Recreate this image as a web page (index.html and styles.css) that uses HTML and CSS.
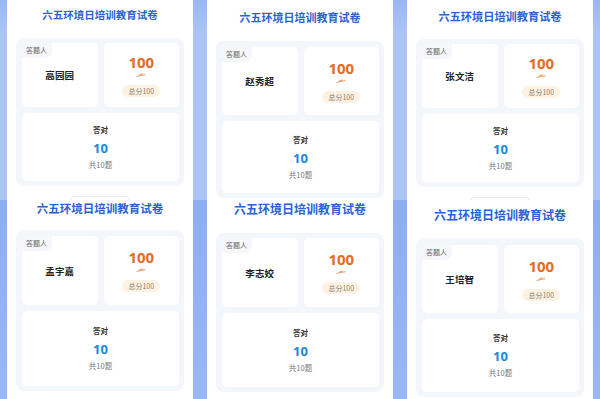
FILE: index.html
```html
<!DOCTYPE html>
<html lang="zh-CN">
  <head>
    <meta charset="utf-8">
    <title>六五环境日培训教育试卷</title>
    <link rel="stylesheet" href="styles.css">
  </head>
  <body>
    <div class="collage">
      <div class="shot s1">
        <div class="phone">
          <h1 class="title">六五环境日培训教育试卷</h1>
          <div class="panel">
            <div class="card who"><span class="tag">答题人</span><span class="name">高园园</span></div>
            <div class="card score">
              <span class="points">100</span>
              <svg class="swoosh" width="10" height="4" viewBox="0 0 10 4"><path d="M1 3.4 L6 2.2 L9 1.8" /><path d="M3.5 2 L6.5 0.9" /></svg>
              <span class="total">总分100</span>
            </div>
            <div class="card right"><span class="label">答对</span><span class="count">10</span><span class="of">共10题</span></div>
          </div>
          <div class="btn"></div>
        </div>
      </div>
      <div class="shot s2">
        <div class="phone">
          <h1 class="title">六五环境日培训教育试卷</h1>
          <div class="panel">
            <div class="card who"><span class="tag">答题人</span><span class="name">赵秀超</span></div>
            <div class="card score">
              <span class="points">100</span>
              <svg class="swoosh" width="10" height="4" viewBox="0 0 10 4"><path d="M1 3.4 L6 2.2 L9 1.8" /><path d="M3.5 2 L6.5 0.9" /></svg>
              <span class="total">总分100</span>
            </div>
            <div class="card right"><span class="label">答对</span><span class="count">10</span><span class="of">共10题</span></div>
          </div>
          <div class="btn"></div>
        </div>
      </div>
      <div class="shot s3">
        <div class="phone">
          <h1 class="title">六五环境日培训教育试卷</h1>
          <div class="panel">
            <div class="card who"><span class="tag">答题人</span><span class="name">张文洁</span></div>
            <div class="card score">
              <span class="points">100</span>
              <svg class="swoosh" width="10" height="4" viewBox="0 0 10 4"><path d="M1 3.4 L6 2.2 L9 1.8" /><path d="M3.5 2 L6.5 0.9" /></svg>
              <span class="total">总分100</span>
            </div>
            <div class="card right"><span class="label">答对</span><span class="count">10</span><span class="of">共10题</span></div>
          </div>
          <div class="btn"></div>
        </div>
      </div>
      <div class="shot s4">
        <div class="phone">
          <h1 class="title">六五环境日培训教育试卷</h1>
          <div class="panel">
            <div class="card who"><span class="tag">答题人</span><span class="name">孟宇嘉</span></div>
            <div class="card score">
              <span class="points">100</span>
              <svg class="swoosh" width="10" height="4" viewBox="0 0 10 4"><path d="M1 3.4 L6 2.2 L9 1.8" /><path d="M3.5 2 L6.5 0.9" /></svg>
              <span class="total">总分100</span>
            </div>
            <div class="card right"><span class="label">答对</span><span class="count">10</span><span class="of">共10题</span></div>
          </div>
          <div class="btn"></div>
        </div>
      </div>
      <div class="shot s5">
        <div class="phone">
          <h1 class="title">六五环境日培训教育试卷</h1>
          <div class="panel">
            <div class="card who"><span class="tag">答题人</span><span class="name">李志姣</span></div>
            <div class="card score">
              <span class="points">100</span>
              <svg class="swoosh" width="10" height="4" viewBox="0 0 10 4"><path d="M1 3.4 L6 2.2 L9 1.8" /><path d="M3.5 2 L6.5 0.9" /></svg>
              <span class="total">总分100</span>
            </div>
            <div class="card right"><span class="label">答对</span><span class="count">10</span><span class="of">共10题</span></div>
          </div>
          <div class="btn"></div>
        </div>
      </div>
      <div class="shot s6">
        <div class="phone">
          <h1 class="title">六五环境日培训教育试卷</h1>
          <div class="panel">
            <div class="card who"><span class="tag">答题人</span><span class="name">王培智</span></div>
            <div class="card score">
              <span class="points">100</span>
              <svg class="swoosh" width="10" height="4" viewBox="0 0 10 4"><path d="M1 3.4 L6 2.2 L9 1.8" /><path d="M3.5 2 L6.5 0.9" /></svg>
              <span class="total">总分100</span>
            </div>
            <div class="card right"><span class="label">答对</span><span class="count">10</span><span class="of">共10题</span></div>
          </div>
          <div class="btn"></div>
        </div>
      </div>
    </div>
  </body>
</html>
```

FILE: styles.css
```css
* {
  margin: 0;
  padding: 0;
  box-sizing: border-box;
}
body {
  width: 600px;
  height: 399px;
  overflow: hidden;
  background: #fff;
  font-family: "Noto Sans CJK SC", "Noto Sans", sans-serif;
}
.collage {
  display: grid;
  grid-template-columns: 200px 200px 200px;
  grid-template-rows: 200px 199px;
}
.shot {
  overflow: hidden;
  padding: 0 7px;
  background: linear-gradient(180deg, #9bb7f5 0%, #a9c3f7 15%, #a9c3f7 100%);
}
.s4, .s5, .s6 {
  background: linear-gradient(180deg, #8eaef3 0%, #9ab7f5 100%);
}
.phone {
  height: 100%;
  background: #fff;
  display: flex;
  flex-direction: column;
}
.title {
  margin-top: var(--pt);
  height: 16px;
  line-height: 16px;
  text-align: center;
  font-size: var(--tfs);
  font-weight: 600;
  color: #2b62d3;
  white-space: nowrap;
}
.panel {
  margin: var(--gap) 9px 0;
  padding: var(--ppt) 5px 5px 6px;
  background: #f3f6fa;
  border-radius: 8px;
  display: grid;
  grid-template-columns: 1fr 1fr;
  grid-template-rows: var(--ch) var(--bh);
  gap: 6px;
}
.card {
  background: #fff;
  border-radius: 5px;
  display: flex;
  flex-direction: column;
  align-items: center;
  justify-content: center;
}
.who {
  position: relative;
}
.tag {
  position: absolute;
  left: 0;
  top: 0;
  padding: 2px 5px 3px 4px;
  font-size: 7px;
  line-height: 10px;
  color: #666;
  background: #f5f7fa;
  border-radius: 5px 0 7px 0;
}
.name {
  font-size: 9.5px;
  font-weight: 600;
  color: #222;
  letter-spacing: 0.2px;
}
.points {
  font-family: "Noto Sans", sans-serif;
  font-size: 15px;
  line-height: 15px;
  font-weight: 700;
  color: #e56c22;
  margin-top: 1px;
}
.swoosh {
  margin-top: 3px;
  fill: none;
  stroke: #ec8a45;
  stroke-width: 0.9;
  stroke-linecap: round;
}
.total {
  margin-top: 8px;
  padding: 0 6px;
  height: 12px;
  line-height: 12px;
  font-size: 7px;
  color: #8a8078;
  background: #fdf2e2;
  border-radius: 6px;
}
.right {
  grid-column: 1 / 3;
}
.label {
  font-size: 7.5px;
  line-height: 10px;
  font-weight: 600;
  color: #333;
}
.count {
  margin-top: 6px;
  font-family: "Noto Sans", sans-serif;
  font-size: 13px;
  line-height: 14px;
  font-weight: 700;
  color: #1f84da;
}
.of {
  margin-top: 5px;
  font-size: 7.5px;
  line-height: 10px;
  color: #777;
}
.btn {
  margin: 10px auto 0;
  width: 60px;
  height: 20px;
  flex: none;
  border: 1px solid #e6e9ee;
  border-radius: 4px;
}
.s1 { --pt: 7px; --gap: 15px; --ppt: 5px; --ch: 64px; --bh: 68px; --tfs: 10.5px; }
.s2 { --pt: 9px; --gap: 16px; --ppt: 6px; --ch: 68px; --bh: 72px; --tfs: 11px; }
.s3 { --pt: 8px; --gap: 15px; --ppt: 5px; --ch: 64px; --bh: 68px; --tfs: 11.2px; }
.s4 { --pt: 0px; --gap: 14px; --ppt: 6px; --ch: 69px; --bh: 75px; --tfs: 11.5px; }
.s5 { --pt: 1px; --gap: 16px; --ppt: 5px; --ch: 69px; --bh: 74px; --tfs: 12px; }
.s6 { --pt: 7px; --gap: 15px; --ppt: 7px; --ch: 68px; --bh: 73px; --tfs: 12px; }
```
